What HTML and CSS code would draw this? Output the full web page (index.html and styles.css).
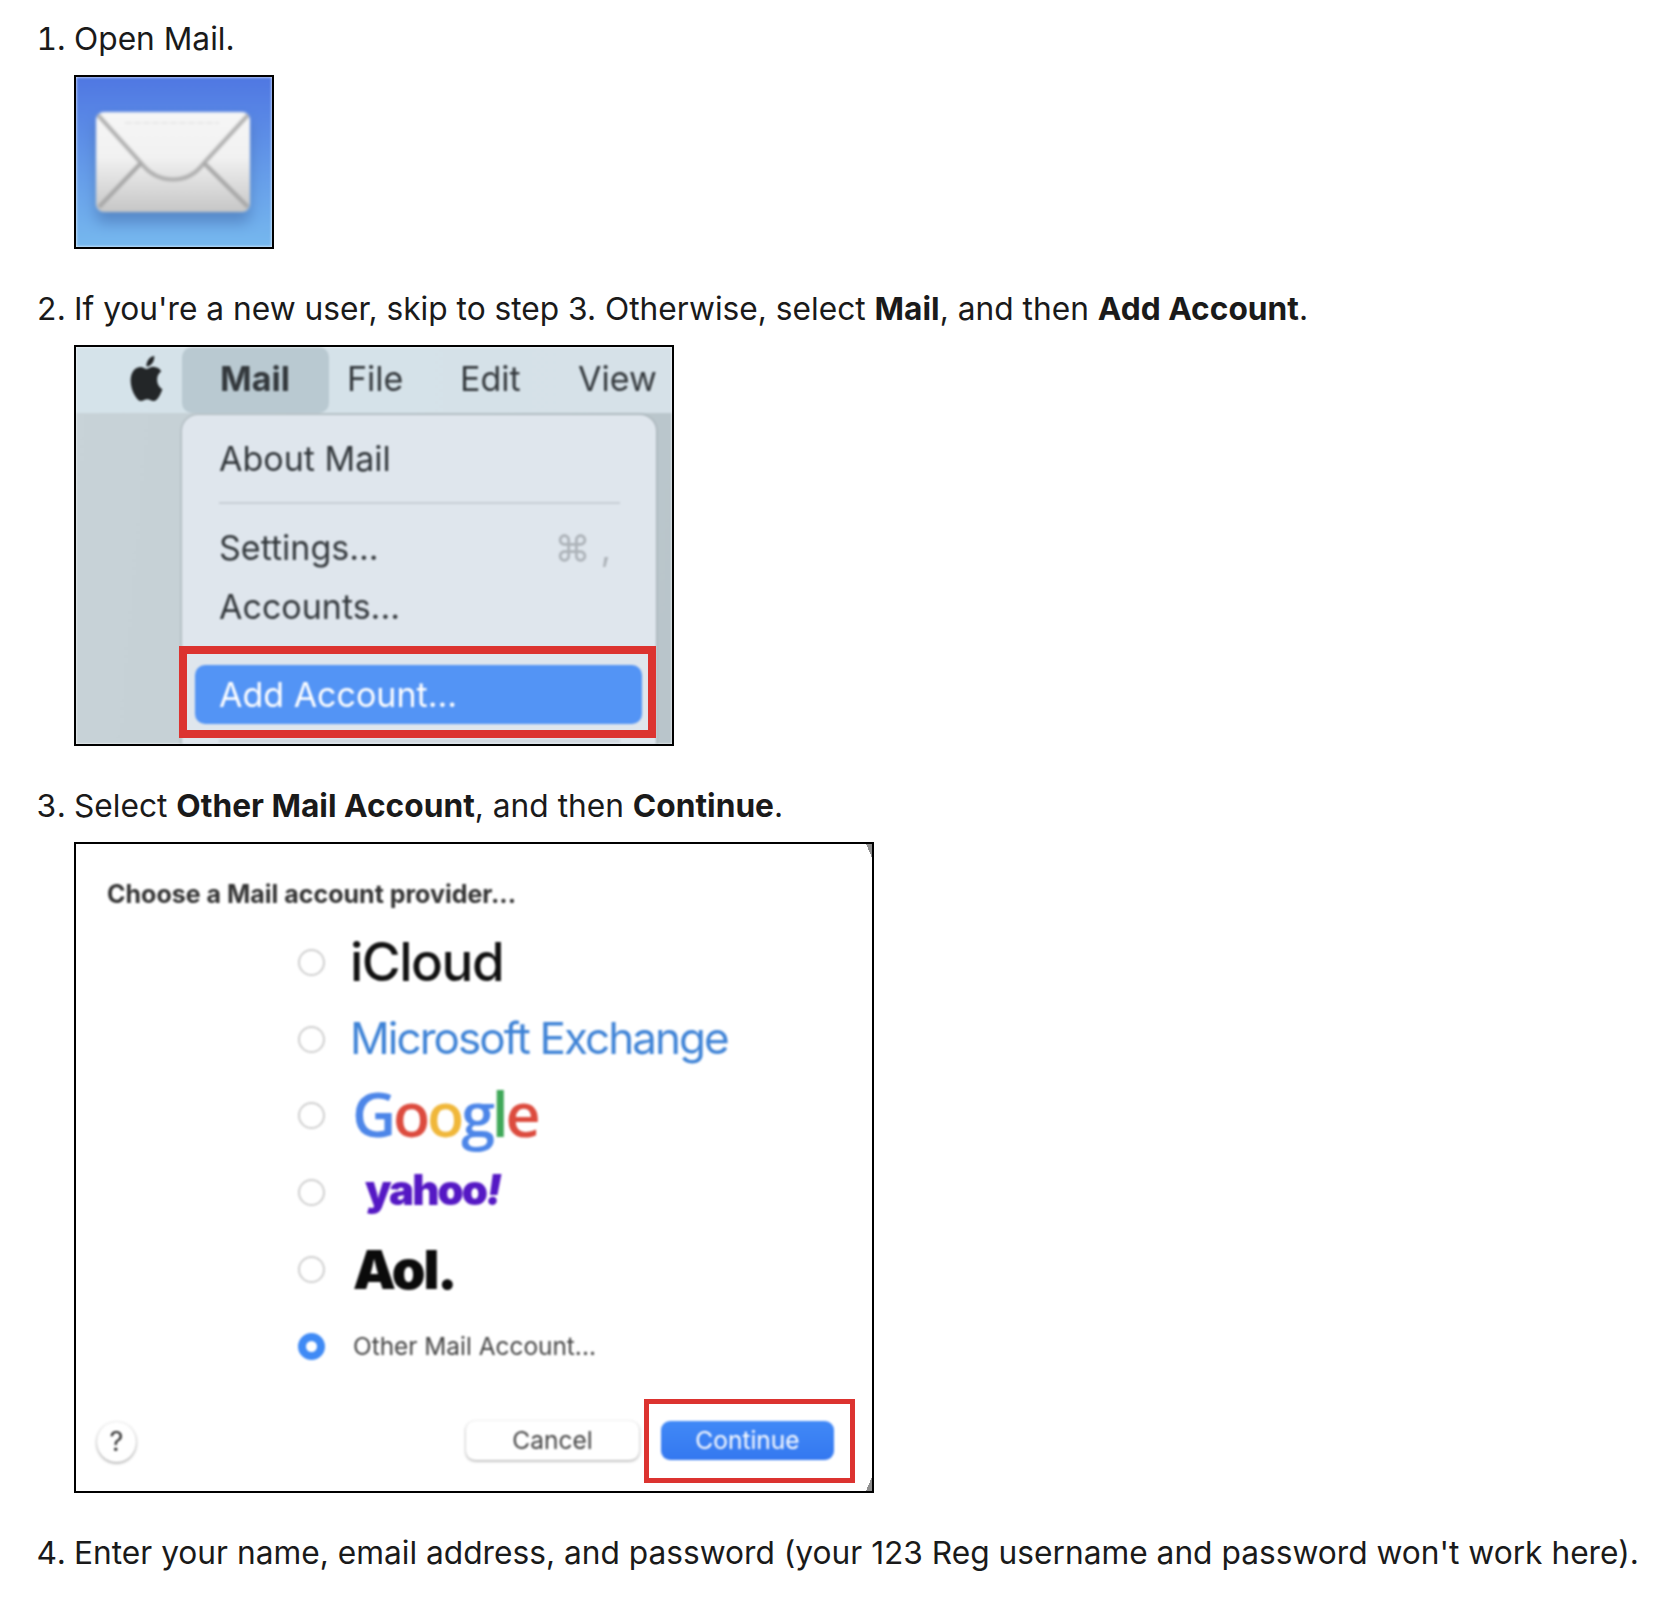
FILE: index.html
```html
<!DOCTYPE html>
<html lang="en">
<head>
<meta charset="utf-8">
<title>Add account to Mail</title>
<link rel="stylesheet" href="styles.css">
</head>
<body>
<ol class="steps">
  <li class="step">
    <p class="step-text">Open Mail.</p>
    <div class="shot shot-icon">
      <svg class="icon-art" width="196" height="170" viewBox="0 0 196 170">
        <defs>
          <linearGradient id="sky" x1="0" y1="0" x2="0" y2="1">
            <stop offset="0" stop-color="#4f77e2"/>
            <stop offset="1" stop-color="#76b8ee"/>
          </linearGradient>
          <linearGradient id="paper" x1="0" y1="0" x2="0" y2="1">
            <stop offset="0" stop-color="#f6f6f6"/>
            <stop offset=".45" stop-color="#f1f1f1"/>
            <stop offset="1" stop-color="#c6c6c6"/>
          </linearGradient>
        </defs>
        <rect width="196" height="170" fill="url(#sky)"/>
        <rect x="20" y="42" width="154" height="104" rx="8" fill="#3a5f9c" opacity=".45" class="soft"/>
        <rect x="20" y="35" width="154" height="100" rx="8" fill="url(#paper)"/>
        <path d="M22 38 L65 86 C82 108 112 108 128 86 L172 38" fill="none" stroke="#b0b0b0" stroke-width="4"/>
        <path d="M65 86 L23 130 M128 86 L172 130" fill="none" stroke="#a8a8a8" stroke-width="4"/>
        <path d="M49 46 H143" stroke="#e6e6e6" stroke-width="2" stroke-dasharray="7 2"/>
      </svg>
    </div>
  </li>

  <li class="step">
    <p class="step-text">If you're a new user, skip to step 3. Otherwise, select <strong>Mail</strong>, and then <strong>Add Account</strong>.</p>
    <div class="shot shot-menu">
      <div class="menu-art">
        <div class="menubar">
          <svg class="apple" viewBox="0 0 24 24" width="39" height="45" preserveAspectRatio="none">
            <path fill="#232628" d="M12.152 6.896c-.948 0-2.415-1.078-3.96-1.04-2.04.027-3.91 1.183-4.961 3.014-2.117 3.675-.546 9.103 1.519 12.09 1.013 1.454 2.208 3.09 3.792 3.039 1.52-.065 2.09-.987 3.935-.987 1.831 0 2.35.987 3.96.948 1.637-.026 2.676-1.48 3.676-2.948 1.156-1.688 1.636-3.325 1.662-3.415-.039-.013-3.182-1.221-3.22-4.857-.026-3.04 2.48-4.494 2.597-4.559-1.429-2.09-3.623-2.324-4.39-2.376-2-.156-3.675 1.09-4.61 1.09zM15.53 3.83c.843-1.012 1.4-2.427 1.245-3.83-1.207.052-2.662.805-3.532 1.818-.78.896-1.454 2.338-1.273 3.714 1.338.104 2.715-.688 3.559-1.701"/>
          </svg>
          <span class="bar-active">Mail</span>
          <span class="bar-item bar-file">File</span>
          <span class="bar-item bar-edit">Edit</span>
          <span class="bar-item">View</span>
        </div>
        <div class="dropdown">
          <div class="menu-row row-about">About Mail</div>
          <div class="menu-sep"></div>
          <div class="menu-row row-settings"><span>Settings...</span><span class="shortcut">⌘ ,</span></div>
          <div class="menu-row row-accounts">Accounts...</div>
          <div class="menu-add">Add Account...</div>
          <div class="menu-sep menu-sep-end"></div>
        </div>
      </div>
      <div class="callout callout-menu"></div>
    </div>
  </li>

  <li class="step">
    <p class="step-text">Select <strong>Other Mail Account</strong>, and then <strong>Continue</strong>.</p>
    <div class="shot shot-dialog">
      <div class="dialog-art">
        <div class="dialog-title">Choose a Mail account provider...</div>
        <div class="providers">
          <div class="provider"><span class="radio"></span><span class="brand brand-icloud">iCloud</span></div>
          <div class="provider"><span class="radio"></span><span class="brand brand-exchange">Microsoft Exchange</span></div>
          <div class="provider"><span class="radio"></span><span class="brand brand-google"><span class="g-blue">G</span><span class="g-red">o</span><span class="g-yellow">o</span><span class="g-blue">g</span><span class="g-green">l</span><span class="g-red">e</span></span></div>
          <div class="provider"><span class="radio"></span><span class="brand brand-yahoo">yahoo<i>!</i></span></div>
          <div class="provider"><span class="radio"></span><span class="brand brand-aol">Aol.</span></div>
          <div class="provider"><span class="radio radio-on"></span><span class="brand brand-other">Other Mail Account...</span></div>
        </div>
        <div class="dialog-footer">
          <span class="help">?</span>
          <span class="btn btn-cancel">Cancel</span>
          <span class="btn btn-continue">Continue</span>
        </div>
      </div>
      <div class="callout callout-dialog"></div>
    </div>
  </li>

  <li class="step">
    <p class="step-text">Enter your name, email address, and password (your 123 Reg username and password won't work here).</p>
  </li>
</ol>
</body>
</html>
```
FILE: styles.css
```css
* { box-sizing: border-box; }

html, body {
  margin: 0;
  padding: 0;
  background: #fff;
}

body {
  font-family: Inter, "Liberation Sans", sans-serif;
  font-size: 31.7px;
  line-height: 48px;
  color: #1a1a1a;
  overflow: hidden;
}

.steps {
  margin: 0;
  padding: 15px 0 0 74px;
}

.step { margin: 0 0 36px; }

.step-text {
  margin: 0 0 12px;
  white-space: nowrap;
}

.step-text strong { font-weight: 700; }

.shot {
  position: relative;
  border: 2px solid #000;
  overflow: hidden;
  background: #fff;
}

.shot-icon { width: 200px; height: 174px; }
.shot-menu { width: 600px; height: 401px; }
.shot-dialog { width: 800px; height: 651px; }

.icon-art {
  display: block;
  filter: blur(1.6px);
}

.soft { filter: blur(7px); }

/* menu screenshot */
.menu-art {
  height: 100%;
  background: linear-gradient(95deg, #c8d3d8 0%, #c2cdd2 60%, #b9c5cb 100%);
  filter: blur(.9px);
  font-size: 34px;
  line-height: 44px;
  color: #33383c;
}

.menubar {
  display: flex;
  align-items: center;
  height: 66px;
  padding-left: 51px;
  background: linear-gradient(90deg, #d5e3ea, #d6e1e8);
}

.apple { flex: none; margin: -3px 16px 0 0; }

.bar-active {
  display: flex;
  align-items: center;
  width: 147px;
  height: 66px;
  margin-right: 18px;
  padding: 0 0 3px 38px;
  border-radius: 10px;
  background: #b9c9d1;
  font-weight: 700;
}

.bar-item { flex: none; padding-bottom: 3px; }
.bar-file { width: 113px; }
.bar-edit { width: 118px; }

.dropdown {
  width: 474px;
  height: 340px;
  margin: 2px 0 0 106px;
  padding-top: 19px;
  border-radius: 16px 16px 0 0;
  background: #dfe6ed;
  box-shadow: 0 0 3px #8c969c;
}

.menu-row {
  display: flex;
  justify-content: space-between;
  height: 50px;
  padding: 3px 45px 3px 37px;
}

.menu-sep {
  height: 2px;
  margin: 18px 36px 0 37px;
  background: #c7ced5;
}

.row-settings { margin-top: 19px; }
.row-accounts { margin-top: 9px; }

.shortcut {
  color: #adb3b9;
  font-size: 36px;
  white-space: pre;
}

.menu-add {
  display: flex;
  align-items: center;
  width: 447px;
  height: 59px;
  margin: 33px 0 0 13px;
  padding-left: 24px;
  border-radius: 10px;
  background: #5394f5;
  color: #fff;
}

.menu-sep-end { margin-top: 16px; }

.callout {
  position: absolute;
  border: 8px solid #dc3330;
}

.callout-menu {
  left: 103px;
  top: 299px;
  width: 477px;
  height: 92px;
}

/* dialog screenshot */
.shot-dialog::before,
.shot-dialog::after {
  content: "";
  position: absolute;
  right: 0;
  width: 6px;
  height: 14px;
  z-index: 1;
}

.shot-dialog::before {
  top: 0;
  background: linear-gradient(to top right, transparent 50%, #8f8f8f 50%);
}

.shot-dialog::after {
  bottom: 0;
  background: linear-gradient(to bottom right, transparent 50%, #8f8f8f 50%);
}

.dialog-art {
  height: 100%;
  filter: blur(.8px);
  color: #333;
}

.dialog-title {
  height: 80px;
  padding: 35px 0 0 31px;
  font-size: 25px;
  line-height: 30px;
  font-weight: 700;
  white-space: nowrap;
}

.providers {
  padding-left: 222px;
}

.provider {
  display: flex;
  align-items: center;
  height: 76.8px;
}

.radio {
  flex: none;
  width: 27px;
  height: 27px;
  margin-right: 25px;
  border: 2px solid #cfcfcf;
  border-radius: 50%;
  background: #fff;
}

.radio-on {
  border: 8px solid #3f8af5;
}

.brand { white-space: nowrap; }

.brand-icloud {
  color: #111;
  font-size: 53px;
  line-height: 60px;
  font-weight: 500;
  letter-spacing: -1.5px;
}

.brand-exchange {
  padding-bottom: 3px;
  color: #3f83d6;
  font-size: 44px;
  line-height: 60px;
  font-weight: 400;
  letter-spacing: -1.95px;
}

.brand-google {
  margin-left: 2px;
  padding-bottom: 4px;
  font-family: "Open Sans", Inter, sans-serif;
  font-size: 61px;
  line-height: 60px;
  font-weight: 600;
  letter-spacing: -3.2px;
}

.g-blue { color: #4d86e8; }
.g-red { color: #dc4b3e; }
.g-yellow { color: #f0b73a; }
.g-green { color: #3fa858; }

.brand-yahoo {
  margin-left: 15px;
  padding-bottom: 6px;
  color: #5518c4;
  font-size: 42px;
  line-height: 50px;
  font-weight: 900;
  letter-spacing: -2px;
}

.brand-aol {
  margin-left: 3px;
  color: #0b0b0b;
  font-size: 54px;
  line-height: 60px;
  font-weight: 900;
  letter-spacing: -2px;
}

.brand-other {
  margin-left: 3px;
  color: #444;
  font-size: 24.4px;
  line-height: 30px;
}

.dialog-footer {
  display: flex;
  align-items: center;
  height: 106px;
  padding: 6px 38px 0 21px;
}

.help {
  flex: none;
  width: 39px;
  height: 40px;
  margin: 2px auto 0 0;
  border-radius: 50%;
  background: #fff;
  box-shadow: 0 1px 3px rgba(0, 0, 0, .45);
  color: #333;
  font-size: 27px;
  line-height: 40px;
  text-align: center;
}

.btn {
  flex: none;
  width: 173px;
  height: 39px;
  border-radius: 9px;
  font-size: 24.5px;
  line-height: 39px;
  text-align: center;
}

.btn-cancel {
  margin-right: 22px;
  background: #fff;
  box-shadow: 0 1px 3px rgba(0, 0, 0, .4);
  color: #444;
}

.btn-continue {
  background: linear-gradient(#4189f7, #3478f0);
  color: #fff;
}

.callout-dialog {
  left: 568px;
  top: 555px;
  width: 211px;
  height: 84px;
  border-width: 5px;
}
```
